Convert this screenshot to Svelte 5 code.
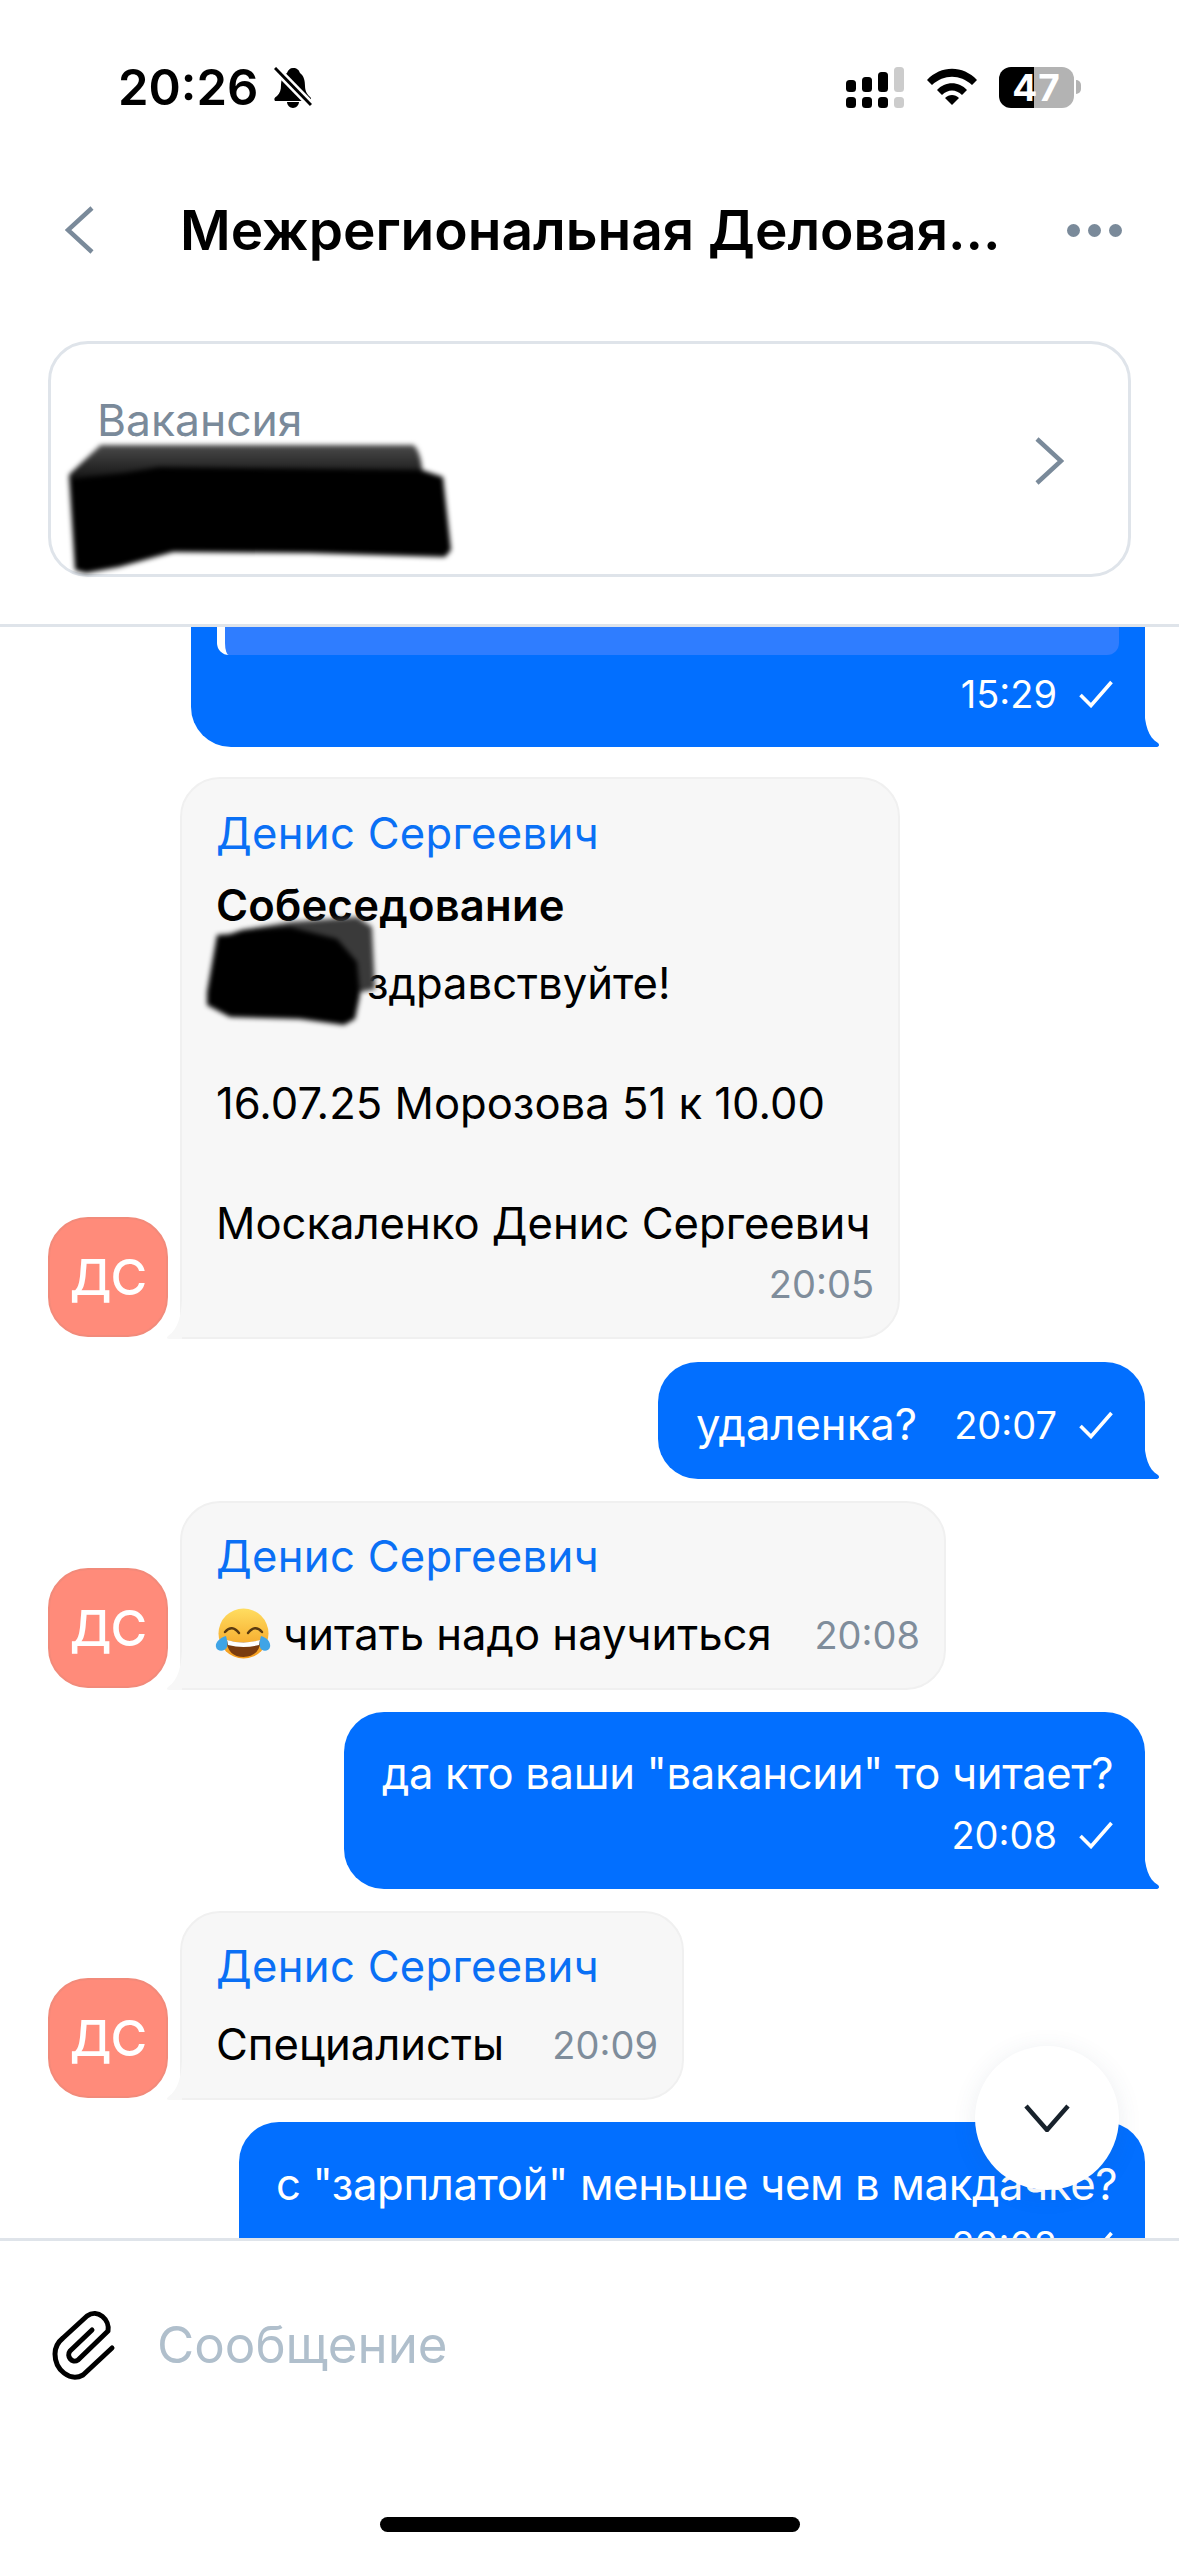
<script>
  const name = 'Денис Сергеевич';
</script>

{#snippet check()}
  <svg class="check" viewBox="0 0 34 28" aria-hidden="true"><path d="M1.5 15 L12 25.5 L32.5 2" fill="none" stroke="#fff" stroke-width="3.6"/></svg>
{/snippet}
{#snippet blueTail()}
  <svg class="tail tail-r" viewBox="0 0 16 40" aria-hidden="true"><path d="M0 0 C1 18 4 30 14 36 C16 38 15 40 12 40 L0 40 Z" fill="#026fff"/></svg>
{/snippet}
{#snippet grayTail()}
  <svg class="tail tail-l" viewBox="0 0 16 40" aria-hidden="true"><path d="M16 0 C15 18 12 30 2 37 C0 39 1 40 4 40 L16 40 Z" fill="#f7f7f7"/></svg>
{/snippet}
{#snippet avatar()}
  <div class="avatar">ДС</div>
{/snippet}

<div class="page">
  <div class="status">
    <div class="status-left">
      <span class="clock">20:26</span>
      <svg class="bell" viewBox="0 0 38 41" aria-hidden="true">
        <path d="M19 1 C23 1 25 3 26 6 C30 9 31 14 31 19 C31 25 34 28 37 31 L37 34 L1 34 C0 32 0 31 3 29 C6 26 7 23 7 18 C7 13 9 8 13 6 C14 3 16 1 19 1 Z M13 35 L25 35 C25 38 22 41 19 41 C16 41 13 38 13 35 Z" fill="#000"/>
        <path d="M1 1 L37 38" stroke="#fff" stroke-width="8"/>
        <path d="M1 1 L37 38" stroke="#000" stroke-width="3"/>
      </svg>
    </div>
    <div class="status-right">
      <svg class="signal" viewBox="0 0 58 41" aria-hidden="true">
        <g fill="#000">
          <rect x="0" y="13" width="10" height="12" rx="3.5"/><rect x="16" y="10" width="10" height="15" rx="3.5"/><rect x="32" y="5" width="10" height="20" rx="3.5"/>
          <rect x="0" y="30" width="10" height="11" rx="3.5"/><rect x="16" y="30" width="10" height="11" rx="3.5"/><rect x="32" y="30" width="10" height="11" rx="3.5"/>
        </g>
        <g fill="#ccc"><rect x="48" y="0" width="10" height="25" rx="3.5"/><rect x="48" y="30" width="10" height="11" rx="3.5"/></g>
      </svg>
      <svg class="wifi" viewBox="0 0 50 38" aria-hidden="true">
        <path d="M0 12 C14 -3 36 -3 50 12 L45 17 C33 6 17 6 5 17 Z" fill="#000"/>
        <path d="M10 22 C18 13 32 13 40 22 L35 27 C29 21 21 21 15 27 Z" fill="#000"/>
        <path d="M18 30 C22 26 28 26 32 30 L25 37 Z" fill="#000"/>
      </svg>
      <div class="battery"><span>47</span></div>
      <div class="nub"></div>
    </div>
  </div>

  <header class="nav">
    <svg class="back" viewBox="0 0 30 48" aria-hidden="true"><path d="M27 2 L3 24 L27 46" fill="none" stroke="#7a8a9a" stroke-width="4.5"/></svg>
    <h1>Межрегиональная Деловая...</h1>
    <div class="dots"><i></i><i></i><i></i></div>
  </header>

  <section class="card-wrap">
    <div class="card">
      <div class="label">Вакансия</div>
      <svg class="chev" viewBox="0 0 30 48" aria-hidden="true"><path d="M3 2 L27 24 L3 46" fill="none" stroke="#7a8a9a" stroke-width="4.5"/></svg>
      <svg class="scribble s1" viewBox="0 0 385 135" aria-hidden="true">
        <defs><linearGradient id="band" x1="0" y1="0" x2="0" y2="1"><stop offset="0" stop-color="#4a4a4a"/><stop offset="1" stop-color="#151515"/></linearGradient></defs>
        <path d="M32 0 L344 0 C350 5 352 15 353 25 L374 32 L382 105 L376 112 L240 108 L104 107 L50 122 L17 128 L6 125 L0 30 Z" fill="#000"/>
        <path d="M32 0 L344 0 C350 5 352 15 353 25 L90 22 L55 28 L0 34 Z" fill="url(#band)"/>
      </svg>
    </div>
  </section>

  <main class="chat">
    <div class="bubble blue first">
      <div class="quote"></div>
      <div class="meta"><span class="time">15:29</span>{@render check()}</div>
      {@render blueTail()}
    </div>

    <div class="row first-in">
      {@render avatar()}
      <div class="bubble gray g1">
        <div class="sender">{name}</div>
        <div class="title">Собеседование</div>
        <div class="line greet">здравствуйте!</div>
        <div class="line gap">16.07.25 Морозова 51 к 10.00</div>
        <div class="line gap">Москаленко Денис Сергеевич</div>
        <div class="meta"><span class="time">20:05</span></div>
        <svg class="scribble s2" viewBox="0 0 170 110" aria-hidden="true">
          <path d="M35 13 L83 5 L150 0 L165 10 L168 72 L140 78 L100 40 Z" fill="#3a3a3a"/>
          <path d="M10 18 L23 17 L35 13 L83 10 L130 22 L150 45 L153 78 L148 102 L137 108 L93 102 L23 100 L0 88 L0 75 Z" fill="#000"/>
        </svg>
        {@render grayTail()}
      </div>
    </div>

    <div class="bubble blue b2">
      <div class="inline"><span>удаленка?</span><span class="meta-in"><span class="time">20:07</span>{@render check()}</span></div>
      {@render blueTail()}
    </div>

    <div class="row">
      {@render avatar()}
      <div class="bubble gray g2">
        <div class="sender">{name}</div>
        <div class="inline">
          <span class="with-emoji">
            <svg class="emoji" viewBox="0 0 80 70" aria-hidden="true">
              <defs><linearGradient id="face" x1="0" y1="0" x2="0" y2="1"><stop offset="0" stop-color="#ffdd60"/><stop offset="1" stop-color="#f49a1c"/></linearGradient></defs>
              <circle cx="38.5" cy="33.5" r="25" fill="url(#face)"/>
              <path d="M21 40 Q38.5 45 56 40 Q54 57 38.5 57 Q23 57 21 40 Z" fill="#7a3c10"/>
              <path d="M22 40 Q38.5 45 55 40 L54 45 Q38.5 49 23 45 Z" fill="#fff"/>
              <path d="M20 32 Q27 24 34 33 M43 33 Q50 24 57 32" fill="none" stroke="#5a3a10" stroke-width="2.4" stroke-linecap="round"/>
              <path d="M21 36 C14 38 10 43 11 47 C12 52 20 52 22 47 C23 43 22 40 21 36 Z M56 36 C63 38 66 43 65 47 C64 52 56 52 55 47 C54 43 55 40 56 36 Z" fill="#3fa4e6"/>
            </svg>
            читать надо научиться</span>
          <span class="time">20:08</span>
        </div>
        {@render grayTail()}
      </div>
    </div>

    <div class="bubble blue b3">
      <div class="line">да кто ваши "вакансии" то читает?</div>
      <div class="meta"><span class="time">20:08</span>{@render check()}</div>
      {@render blueTail()}
    </div>

    <div class="row">
      {@render avatar()}
      <div class="bubble gray g3">
        <div class="sender">{name}</div>
        <div class="inline"><span>Специалисты</span><span class="time">20:09</span></div>
        {@render grayTail()}
      </div>
    </div>

    <div class="bubble blue b4">
      <div class="line">с "зарплатой" меньше чем в макдачке?</div>
      <div class="meta"><span class="time">20:08</span>{@render check()}</div>
    </div>

    <button class="down" aria-label="Вниз">
      <svg viewBox="0 0 46 28" aria-hidden="true"><path d="M2 2 L23 26 L44 2" fill="none" stroke="#18222c" stroke-width="4.5"/></svg>
    </button>
  </main>

  <footer class="composer">
    <div class="input">
      <svg class="clip" viewBox="0 0 90 90" aria-hidden="true"><path d="M72 48 L43 75 C30 82 15 70 15 54 C15 47 18 42 23 38 L47 16 C58 8 70 20 68 31 L38 60 C32 64 26 56 30 51 L52 30" fill="none" stroke="#000" stroke-width="5" stroke-linecap="round" stroke-linejoin="round"/></svg>
      <span class="placeholder">Сообщение</span>
    </div>
    <div class="home"></div>
  </footer>
</div>

<style>
  :global(body) { margin: 0; background: #fff; }
  .page {
    width: 1179px; height: 2556px; background: #fff; overflow: hidden;
    display: flex; flex-direction: column;
    font-family: Inter, "Liberation Sans", sans-serif; color: #000;
    font-size: 43.6px;
  }
  .status { height: 174px; flex: none; box-sizing: border-box; padding: 0 98px 0 118px; display: flex; justify-content: space-between; align-items: center; }
  .status-left { display: flex; align-items: center; gap: 16px; }
  .clock { font-size: 49px; font-weight: 600; line-height: 1; }
  .bell { width: 38px; height: 41px; }
  .status-right { display: flex; align-items: center; }
  .signal { width: 58px; height: 41px; margin-right: 23px; }
  .wifi { width: 50px; height: 38px; margin-right: 22px; }
  .battery { width: 75px; height: 41px; border-radius: 12px; background: linear-gradient(90deg, #000 47%, #b3b3b3 47%); display: flex; align-items: center; justify-content: center; }
  .battery span { color: #fff; font-size: 37px; font-weight: 700; line-height: 1; letter-spacing: 1px; }
  .nub { width: 5px; height: 14px; margin-left: 2px; background: #b3b3b3; border-radius: 0 7px 7px 0; }

  .nav { height: 112px; flex: none; box-sizing: border-box; display: flex; align-items: center; padding: 0 57px 0 65px; }
  .back { width: 30px; height: 48px; flex: none; }
  .nav h1 { margin: 0 0 0 85px; flex: 1; font-size: 55px; font-weight: 600; line-height: 1.2; white-space: nowrap; }
  .dots { display: flex; gap: 8px; }
  .dots i { width: 13px; height: 13px; border-radius: 50%; background: #7a8a9a; display: block; }

  .card-wrap { flex: none; padding: 55px 48px 47px; border-bottom: 3px solid #dfe4ea; }
  .card { position: relative; height: 236px; box-sizing: border-box; border: 3px solid #dfe4ea; border-radius: 40px; padding: 46px 40px 0 46px; }
  .label { font-size: 44.4px; line-height: 60px; color: #7a8a9a; }
  .chev { position: absolute; right: 64px; top: 93px; width: 30px; height: 48px; }
  .scribble { position: absolute; filter: blur(2.5px); }
  .s1 { left: 18px; top: 101px; width: 385px; height: 135px; }
  .s2 { left: 25px; top: 138px; width: 170px; height: 110px; }

  .chat { position: relative; flex: 1; min-height: 0; overflow: hidden; display: flex; flex-direction: column; gap: 22px; padding: 0 34px 0 48px; }
  .bubble { position: relative; box-sizing: border-box; line-height: 60px; flex: none; }
  .blue { align-self: flex-end; background: #026fff; color: #fff; border-radius: 40px 40px 0 40px; }
  .gray { background: #f7f7f7; border: 2px solid #f0f0f0; border-radius: 40px 40px 40px 0; color: #000; }
  .tail { position: absolute; bottom: 0; width: 16px; height: 40px; }
  .tail-r { right: -15px; }
  .tail-l { left: -16px; bottom: -2px; }
  .row { display: flex; align-items: flex-end; gap: 12px; flex: none; }
  .first-in { margin-top: 8px; }
  .avatar { width: 120px; height: 120px; margin-bottom: 2px; flex: none; box-sizing: border-box; border: 2px solid #f28a7a; border-radius: 40px; background: #ff8b7a; color: #fff; font-size: 50px; font-weight: 500; letter-spacing: -1px; display: flex; align-items: center; justify-content: center; }
  .sender { color: #0a70f5; letter-spacing: 0.3px; }
  .time { font-size: 38px; }
  .gray .time { color: #7f8d9b; }
  .blue .line { letter-spacing: -0.35px; }
  .meta { display: flex; justify-content: flex-end; align-items: center; }
  .check { width: 34px; height: 28px; margin-left: 22px; flex: none; }
  .inline { display: flex; justify-content: space-between; align-items: center; white-space: nowrap; }
  .meta-in { display: flex; align-items: center; }

  .first { width: 954px; height: 220px; margin-top: -100px; padding: 0 26px; }
  .quote { height: 128px; box-sizing: border-box; background: #2f7dff; border-left: 8px solid #fff; border-radius: 0 0 12px 12px; }
  .first .meta { margin-top: 9px; padding-right: 6px; }

  .g1 { width: 720px; padding: 25px 24px 23px 34px; }
  .title { font-weight: 600; margin-top: 12px; letter-spacing: 0.2px; }
  .line { white-space: nowrap; }
  .greet { margin-top: 18px; padding-left: 151px; }
  .gap { margin-top: 60px; }

  .b2 { width: 487px; height: 117px; margin-top: 1px; padding: 33px 32px 24px 38px; }
  .g2 { width: 766px; height: 189px; padding: 24px 24px 0 34px; }
  .g2 .inline, .g3 .inline { margin-top: 18px; }
  .with-emoji { display: inline-flex; align-items: center; }
  .emoji { width: 80px; height: 70px; margin: -5px -2px -5px -11px; }
  .b3 { width: 801px; height: 177px; padding: 32px 32px 23px 38px; }
  .b3 .meta { margin-top: 1px; }
  .g3 { width: 504px; height: 189px; padding: 24px 24px 0 34px; }
  .b4 { width: 906px; height: 190px; padding: 33px 32px 0 37px; }

  .down { position: absolute; right: 60px; top: 1419px; width: 144px; height: 144px; border: 0; padding: 0; border-radius: 50%; background: #fff; box-shadow: 0 4px 24px rgba(60, 80, 110, 0.1); display: flex; align-items: center; justify-content: center; }
  .down svg { width: 46px; height: 28px; }

  .composer { flex: none; height: 318px; box-sizing: border-box; border-top: 3px solid #dfe4ea; background: #fff; display: flex; flex-direction: column; align-items: center; position: relative; }
  .input { align-self: stretch; display: flex; align-items: center; padding: 59px 0 0 40px; height: 90px; box-sizing: content-box; gap: 27px; }
  .clip { width: 90px; height: 90px; flex: none; }
  .placeholder { font-size: 51px; line-height: 60px; color: #b0bfcc; }
  .home { width: 420px; height: 15px; margin-top: 127px; border-radius: 8px; background: #000; }
</style>
